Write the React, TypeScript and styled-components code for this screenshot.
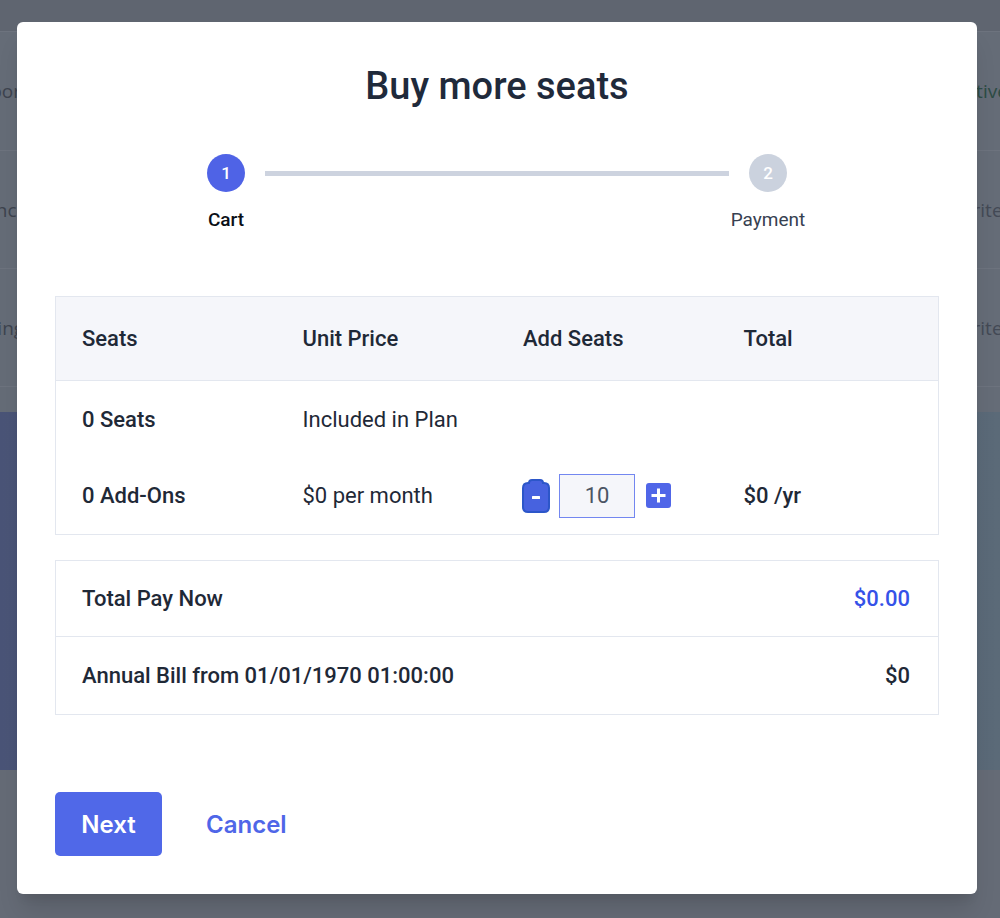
import React from "react";
import styled, { createGlobalStyle } from "styled-components";

const GlobalStyle = createGlobalStyle`
  html, body { margin: 0; padding: 0; }
  body {
    font-family: Roboto, "Noto Sans", Arial, sans-serif;
    background: #656c77;
    overflow: hidden;
  }
  * { box-sizing: border-box; }
`;

/* ---------- dimmed page behind the dialog ---------- */

const Page = styled.div`
  position: relative;
  width: 1000px;
  height: 918px;
  overflow: hidden;
  background: #656b76;
  display: flex;
  flex-direction: column;
`;

const PageTop = styled.div`
  flex: none;
  height: 32px;
  background: #5f6570;
  border-bottom: 1px solid #6d737e;
`;

const PageRow = styled.div<{ $h: number }>`
  flex: none;
  height: ${(p) => p.$h}px;
  background: #656c77;
  border-bottom: 1px solid #6d737e;
  display: flex;
  align-items: center;
  justify-content: space-between;
  font-family: "Open Sans", "Noto Sans", sans-serif;
  font-size: 19px;
  white-space: nowrap;
`;

const LeftCell = styled.span`
  margin-left: -41px;
  color: #3d434e;
`;

const RightCell = styled.span<{ $green?: boolean }>`
  width: 45px;
  overflow: hidden;
  color: ${(p) => (p.$green ? "#2c4b44" : "#434955")};
`;

const PageGap = styled.div`
  flex: none;
  height: 25px;
  background: #656c77;
`;

const Hero = styled.div`
  flex: none;
  height: 358px;
  background: linear-gradient(90deg, #4a5477 0%, #52607a 50%, #5b6a78 100%);
`;

/* ---------- dialog ---------- */

const Overlay = styled.div`
  position: absolute;
  inset: 0;
  padding: 22px 0 0 17px;
`;

const Modal = styled.div`
  width: 960px;
  background: #ffffff;
  border-radius: 6px;
  padding: 41px 38px 38px;
  font-family: Roboto, "Noto Sans", Arial, sans-serif;
  box-shadow: 0 20px 25px -5px rgba(0, 0, 0, 0.12), 0 10px 10px -5px rgba(0, 0, 0, 0.06);
`;

const Title = styled.h2`
  margin: 0;
  text-align: center;
  font-size: 38px;
  line-height: 46px;
  font-weight: 500;
  color: #1f2a3b;
`;

const Stepper = styled.div`
  width: 618px;
  margin: 45px auto 0;
  display: grid;
  grid-template-columns: 76px 1fr 76px;
  grid-template-rows: 38px auto;
  align-items: center;
`;

const Circle = styled.div<{ $active?: boolean; $col: number }>`
  grid-row: 1;
  grid-column: ${(p) => p.$col};
  justify-self: center;
  width: 38px;
  height: 38px;
  border-radius: 50%;
  background: ${(p) => (p.$active ? "#4f63e6" : "#cbd2de")};
  color: #ffffff;
  font-size: 17px;
  font-weight: 500;
  display: flex;
  align-items: center;
  justify-content: center;
`;

const StepLine = styled.div`
  grid-row: 1;
  grid-column: 2;
  height: 5px;
  margin: 0 1px;
  background: #cdd3df;
`;

const StepLabel = styled.div<{ $active?: boolean; $col: number }>`
  grid-row: 2;
  grid-column: ${(p) => p.$col};
  justify-self: center;
  margin-top: 17px;
  font-size: 19px;
  line-height: 22px;
  white-space: nowrap;
  font-weight: ${(p) => (p.$active ? 500 : 400)};
  color: ${(p) => (p.$active ? "#0b0f17" : "#374151")};
`;

const Table = styled.div`
  margin-top: 65px;
  border: 1px solid #e3e7ef;
`;

const Row = styled.div<{ $h: number; $head?: boolean }>`
  display: grid;
  grid-template-columns: repeat(4, 1fr);
  height: ${(p) => p.$h}px;
  background: ${(p) => (p.$head ? "#f5f6fa" : "#ffffff")};
  border-bottom: ${(p) => (p.$head ? "1px solid #e3e7ef" : "none")};
`;

const Cell = styled.div<{ $weight?: number }>`
  display: flex;
  align-items: center;
  padding: 0 26px;
  font-size: 22px;
  font-weight: ${(p) => p.$weight ?? 400};
  color: #1f2937;
  white-space: nowrap;
`;

const Counter = styled.div`
  display: flex;
  align-items: center;
  margin-left: -1px;
`;

const IconButton = styled.button`
  display: flex;
  align-items: center;
  justify-content: center;
  padding: 0;
  border: none;
  background: none;
  cursor: pointer;
`;

const PlusButton = styled(IconButton)`
  width: 25px;
  height: 25px;
  border-radius: 3px;
  background: #5066e8;
  margin-left: 11px;
`;

const QtyInput = styled.input`
  width: 76px;
  height: 44px;
  margin-left: 9px;
  border: 1px solid #7387f0;
  background: #f5f6fa;
  text-align: center;
  font-family: Roboto, sans-serif;
  font-size: 22px;
  color: #4b5563;
  outline: none;
`;

const Totals = styled.div`
  margin-top: 25px;
  border: 1px solid #e3e7ef;
`;

const TotalRow = styled.div<{ $h: number; $divider?: boolean }>`
  height: ${(p) => p.$h}px;
  display: flex;
  align-items: center;
  justify-content: space-between;
  padding: 0 28px 0 26px;
  border-bottom: ${(p) => (p.$divider ? "1px solid #e3e7ef" : "none")};
  font-size: 22px;
  font-weight: 500;
  color: #1f2937;
`;

const Amount = styled.span<{ $accent?: boolean }>`
  color: ${(p) => (p.$accent ? "#3552e8" : "#1f2937")};
`;

const Footer = styled.div`
  margin-top: 77px;
  display: flex;
  align-items: center;
  gap: 44px;
`;

const PrimaryButton = styled.button`
  width: 107px;
  height: 64px;
  border: none;
  border-radius: 5px;
  background: #5068e8;
  color: #ffffff;
  font-family: Inter, Roboto, sans-serif;
  font-size: 24px;
  font-weight: 600;
  cursor: pointer;
`;

const LinkButton = styled.button`
  border: none;
  background: none;
  padding: 0;
  color: #4f66e8;
  font-family: Inter, Roboto, sans-serif;
  font-size: 24px;
  font-weight: 600;
  cursor: pointer;
`;

const MinusIcon = () => (
  <svg width="28" height="34" viewBox="0 0 28 34">
    <path
      d="M1 9 Q1 4 6 4 H7 Q7 1 10 1 H18 Q21 1 21 4 H22 Q27 4 27 9 V28 Q27 33 22 33 H6 Q1 33 1 28 Z"
      fill="#4762df"
      stroke="#2c56c9"
      strokeWidth="2"
    />
    <rect x="10" y="17" width="8" height="3" rx="0.5" fill="#ffffff" />
  </svg>
);

const PlusIcon = () => (
  <svg width="15" height="15" viewBox="0 0 15 15">
    <rect x="6" y="0.5" width="3" height="14" fill="#ffffff" />
    <rect x="0.5" y="6" width="14" height="3" fill="#ffffff" />
  </svg>
);

export default function App() {
  return (
    <>
      <GlobalStyle />
      <Page>
        <PageTop />
        <PageRow $h={119}>
          <LeftCell>Corporate</LeftCell>
          <RightCell $green>Active</RightCell>
        </PageRow>
        <PageRow $h={118}>
          <LeftCell>Finance</LeftCell>
          <RightCell>Write</RightCell>
        </PageRow>
        <PageRow $h={118}>
          <LeftCell>Serving</LeftCell>
          <RightCell>Write</RightCell>
        </PageRow>
        <PageGap />
        <Hero />

        <Overlay>
          <Modal>
            <Title>Buy more seats</Title>

            <Stepper>
              <Circle $col={1} $active>1</Circle>
              <StepLine />
              <Circle $col={3}>2</Circle>
              <StepLabel $col={1} $active>Cart</StepLabel>
              <StepLabel $col={3}>Payment</StepLabel>
            </Stepper>

            <Table>
              <Row $h={84} $head>
                <Cell $weight={500}>Seats</Cell>
                <Cell $weight={500}>Unit Price</Cell>
                <Cell $weight={500}>Add Seats</Cell>
                <Cell $weight={500}>Total</Cell>
              </Row>
              <Row $h={76}>
                <Cell $weight={500}>0 Seats</Cell>
                <Cell>Included in Plan</Cell>
                <Cell />
                <Cell />
              </Row>
              <Row $h={77}>
                <Cell $weight={500}>0 Add-Ons</Cell>
                <Cell>$0 per month</Cell>
                <Cell>
                  <Counter>
                    <IconButton aria-label="decrease">
                      <MinusIcon />
                    </IconButton>
                    <QtyInput readOnly value="10" />
                    <PlusButton aria-label="increase">
                      <PlusIcon />
                    </PlusButton>
                  </Counter>
                </Cell>
                <Cell $weight={500}>$0 /yr</Cell>
              </Row>
            </Table>

            <Totals>
              <TotalRow $h={76} $divider>
                <span>Total Pay Now</span>
                <Amount $accent>$0.00</Amount>
              </TotalRow>
              <TotalRow $h={77}>
                <span>Annual Bill from 01/01/1970 01:00:00</span>
                <Amount>$0</Amount>
              </TotalRow>
            </Totals>

            <Footer>
              <PrimaryButton>Next</PrimaryButton>
              <LinkButton>Cancel</LinkButton>
            </Footer>
          </Modal>
        </Overlay>
      </Page>
    </>
  );
}
